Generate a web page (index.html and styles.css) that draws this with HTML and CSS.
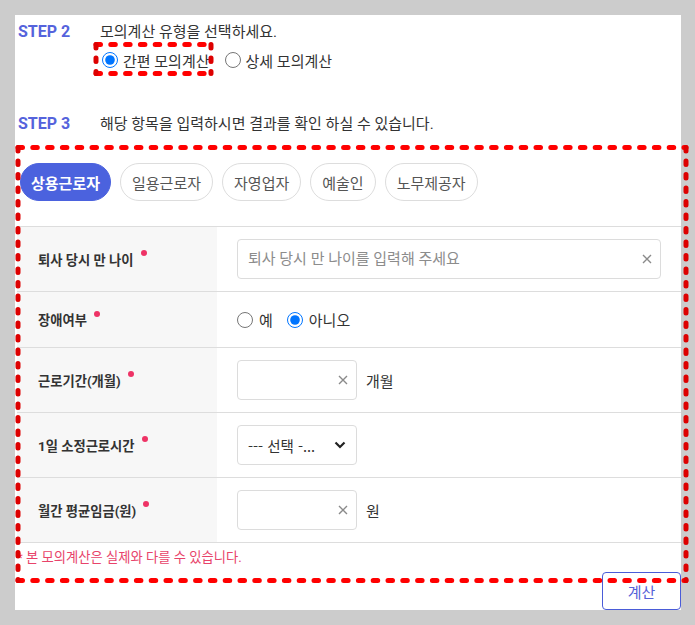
FILE: index.html
```html
<!DOCTYPE html>
<html lang="ko">
<head>
<meta charset="utf-8">
<title>모의계산</title>
<link rel="stylesheet" href="styles.css">
</head>
<body>
<div class="panel">
  <div class="step">
    <div class="step-head"><span class="step-label">STEP 2</span><span class="step-desc">모의계산 유형을 선택하세요.</span></div>
    <div class="type-radios">
      <label class="radio"><input type="radio" name="type" checked><span>간편 모의계산</span></label>
      <label class="radio radio-gap"><input type="radio" name="type"><span>상세 모의계산</span></label>
    </div>
  </div>
  <div class="step step3">
    <div class="step-head"><span class="step-label">STEP 3</span><span class="step-desc">해당 항목을 입력하시면 결과를 확인 하실 수 있습니다.</span></div>
  </div>
  <div class="form">
    <div class="tabs">
      <button class="tab active">상용근로자</button>
      <button class="tab">일용근로자</button>
      <button class="tab">자영업자</button>
      <button class="tab">예술인</button>
      <button class="tab">노무제공자</button>
    </div>
    <div class="table">
      <div class="row">
        <div class="lbl"><span>퇴사 당시 만 나이</span><i class="req"></i></div>
        <div class="val">
          <div class="field wide"><input type="text" placeholder="퇴사 당시 만 나이를 입력해 주세요"><svg class="clear" width="10" height="10" viewBox="0 0 10 10"><path d="M1 1L9 9M9 1L1 9" stroke="#8a8a8a" stroke-width="1.4"/></svg></div>
        </div>
      </div>
      <div class="row">
        <div class="lbl"><span>장애여부</span><i class="req"></i></div>
        <div class="val">
          <div class="radios">
            <label class="radio radio-sm"><input type="radio" name="dis"><span>예</span></label>
            <label class="radio radio-sm radio-gap2"><input type="radio" name="dis" checked><span>아니오</span></label>
          </div>
        </div>
      </div>
      <div class="row">
        <div class="lbl"><span>근로기간(개월)</span><i class="req"></i></div>
        <div class="val">
          <div class="field small"><input type="text"><svg class="clear" width="10" height="10" viewBox="0 0 10 10"><path d="M1 1L9 9M9 1L1 9" stroke="#8a8a8a" stroke-width="1.4"/></svg></div>
          <span class="unit">개월</span>
        </div>
      </div>
      <div class="row">
        <div class="lbl"><span>1일 소정근로시간</span><i class="req"></i></div>
        <div class="val">
          <div class="select"><span class="sel-text">--- 선택 -...</span><svg class="chev" width="12" height="8" viewBox="0 0 12 8"><path d="M1.5 1.5L6 6L10.5 1.5" fill="none" stroke="#222" stroke-width="2.2"/></svg></div>
        </div>
      </div>
      <div class="row">
        <div class="lbl"><span>월간 평균임금(원)</span><i class="req"></i></div>
        <div class="val">
          <div class="field small"><input type="text"><svg class="clear" width="10" height="10" viewBox="0 0 10 10"><path d="M1 1L9 9M9 1L1 9" stroke="#8a8a8a" stroke-width="1.4"/></svg></div>
          <span class="unit">원</span>
        </div>
      </div>
    </div>
    <p class="notice">* 본 모의계산은 실제와 다를 수 있습니다.</p>
    <div class="actions"><button class="calc">계산</button></div>
  </div>
</div>
<svg class="marks" width="695" height="625" viewBox="0 0 695 625">
  <g fill="none" stroke-width="5" stroke-linecap="round">
    <path d="M18 147.5H686M18 580.5H686M96 44.5H211M96 73.5H211" stroke="#ff0000" stroke-dasharray="4.5 10.3"/>
    <path d="M18 147.5V580.5M686 147.5V580.5M96 44.5V73.5M211 44.5V73.5" stroke="#dd0000" stroke-dasharray="3.5 10"/>
  </g>
</svg>
</body>
</html>
```

FILE: styles.css
```css
* { box-sizing: border-box; }
html, body { margin: 0; height: 625px; overflow: hidden; }
body {
  position: relative;
  padding: 15px;
  background: #cccccc;
  font-family: Roboto, "Noto Sans CJK KR", sans-serif;
  color: #333;
}
.panel {
  width: 666px;
  height: 595px;
  background: #fff;
  padding: 7px 0 0 2px;
}
.step-head {
  display: flex;
  align-items: center;
  height: 20px;
  padding-left: 1px;
  font-size: 15px;
  line-height: 20px;
}
.step-label {
  width: 82px;
  font-weight: 700;
  font-size: 16px;
  color: #5563dc;
}
.step-desc { color: #333; }
.type-radios {
  display: flex;
  align-items: center;
  height: 20px;
  margin-top: 8px;
  padding-left: 85px;
  font-size: 15px;
}
.radio {
  display: inline-flex;
  align-items: center;
  color: #333;
}
.radio input {
  width: 16px;
  height: 16px;
  margin: 0 5px 0 0;
}
.radio-gap { margin-left: 15px; }
.step3 { margin-top: 44px; }
.form { margin-top: 29px; }
.tabs {
  display: flex;
  gap: 9px;
  padding-left: 3px;
}
.tab {
  height: 38px;
  padding: 0 11px;
  border: 1px solid #dddddd;
  border-radius: 19px;
  background: #fff;
  color: #555;
  font-family: inherit;
  font-size: 15px;
}
.tab.active {
  background: #4b62de;
  border-color: #4b62de;
  color: #fff;
  font-weight: 700;
  padding: 0 10px;
}
.table {
  margin-top: 25px;
  border-top: 1px solid #dddddd;
}
.row {
  display: flex;
  border-bottom: 1px solid #dddddd;
}
.lbl {
  width: 200px;
  flex: none;
  background: #f7f7f7;
  display: flex;
  align-items: center;
  padding-left: 21px;
  font-size: 13.3px;
  font-weight: 700;
  color: #333;
}
.req {
  width: 6px;
  height: 6px;
  border-radius: 50%;
  background: #ee3366;
  margin: 0 0 12px 7px;
}
.val {
  flex: 1;
  display: flex;
  align-items: center;
  padding: 12px 20px;
  font-size: 15px;
}
.field {
  height: 40px;
  border: 1px solid #dcdcdc;
  border-radius: 4px;
  display: flex;
  align-items: center;
  background: #fff;
}
.field.wide { width: 424px; }
.field.small { width: 120px; }
.field input {
  flex: 1;
  min-width: 0;
  height: 100%;
  border: 0;
  outline: 0;
  background: transparent;
  padding: 0 10px;
  font-family: inherit;
  font-size: 15px;
  color: #333;
}
.field input::placeholder { color: #8c8c8c; }
.clear { flex: none; margin-right: 8px; }
.unit { margin-left: 9px; color: #333; }
.radios {
  height: 31px;
  display: flex;
  align-items: center;
}
.radio-sm input { margin-right: 6px; }
.radio-gap2 { margin-left: 14px; }
.select {
  width: 120px;
  height: 40px;
  border: 1px solid #dcdcdc;
  border-radius: 4px;
  display: flex;
  align-items: center;
  justify-content: space-between;
  padding: 0 10px;
  color: #333;
}
.sel-text {
  white-space: nowrap;
  font-family: "Noto Sans CJK KR", sans-serif;
  font-size: 14.5px;
}
.notice {
  margin: 6px 0 0 0;
  font-size: 13.3px;
  line-height: 18px;
  color: #e8436a;
}
.actions {
  display: flex;
  justify-content: flex-end;
  margin-top: 5px;
}
.calc {
  width: 79px;
  height: 38px;
  border: 1.5px solid #4a5cd8;
  border-radius: 4px;
  background: #fff;
  color: #5461d8;
  font-family: inherit;
  font-size: 15px;
}
.marks {
  position: absolute;
  left: 0;
  top: 0;
  pointer-events: none;
}
```
